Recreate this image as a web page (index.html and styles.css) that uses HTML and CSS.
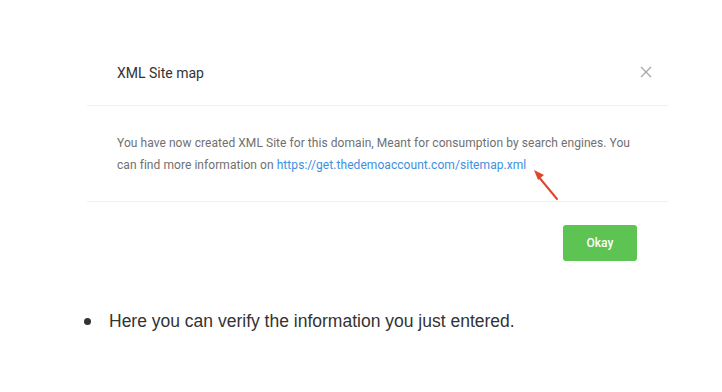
FILE: index.html
```html
<!DOCTYPE html>
<html>
<head>
<meta charset="utf-8">
<link rel="stylesheet" href="styles.css">
</head>
<body>
<div class="modal">
  <div class="modal-header">
    <span class="title">XML Site map</span>
    <svg class="close" width="12" height="12" viewBox="0 0 12 12"><path d="M1 1L11 11M11 1L1 11" stroke="#a6a6a6" stroke-width="1.3" fill="none"/></svg>
  </div>
  <div class="modal-body">
    <p>You have now created XML Site for this domain, Meant for consumption by search engines. You can find more information on <a href="#">https://get.thedemoaccount.com/sitemap.xml</a></p>
    <svg class="arrow" width="30" height="34" viewBox="0 0 30 34"><path d="M25 31L6 8" stroke="#e0452f" stroke-width="2" fill="none" stroke-linecap="round"/><path d="M2 2L12 7L6 12Z" fill="#e0452f"/></svg>
  </div>
  <div class="modal-footer">
    <button class="okay">Okay</button>
  </div>
</div>
<ul class="list">
  <li>Here you can verify the information you just entered.</li>
</ul>
</body>
</html>
```
FILE: styles.css
```css
html, body { margin: 0; padding: 0; background: #fff; }
body { font-family: Roboto, "Liberation Sans", sans-serif; }
.modal { margin-left: 87px; width: 581px; padding-top: 45px; }
.modal-header { display: flex; align-items: center; justify-content: space-between; padding: 0 16px 4px 30px; box-sizing: border-box; height: 61px; border-bottom: 1px solid #f1f1f1; }
.title { font-size: 14px; color: #333; }
.close { display: block; margin-top: -2px; }
.modal-body { position: relative; padding: 26px 30px 25px 30px; border-bottom: 1px solid #f1f1f1; }
.modal-body p { margin: 0; font-size: 12px; line-height: 22px; color: #707070; letter-spacing: 0.06px; }
.modal-body a { color: #3d8fe0; text-decoration: none; }
.arrow { position: absolute; left: 445px; top: 62px; }
.modal-footer { display: flex; justify-content: flex-end; padding: 23px 31px 0 0; }
.okay { width: 74px; height: 36px; border: none; border-radius: 3px; background: #5dc353; color: #fff; font-family: Roboto, sans-serif; font-size: 12px; font-weight: 500; }
.list { list-style: none; margin: 49px 0 0 0; padding-left: 109px; font-family: "Liberation Sans", Arial, sans-serif; font-size: 17.5px; color: #333; }
.list li { position: relative; line-height: 22px; }
.list li::before { content: ""; position: absolute; left: -25px; top: 8px; width: 7px; height: 7px; border-radius: 50%; background: #333; }
```
